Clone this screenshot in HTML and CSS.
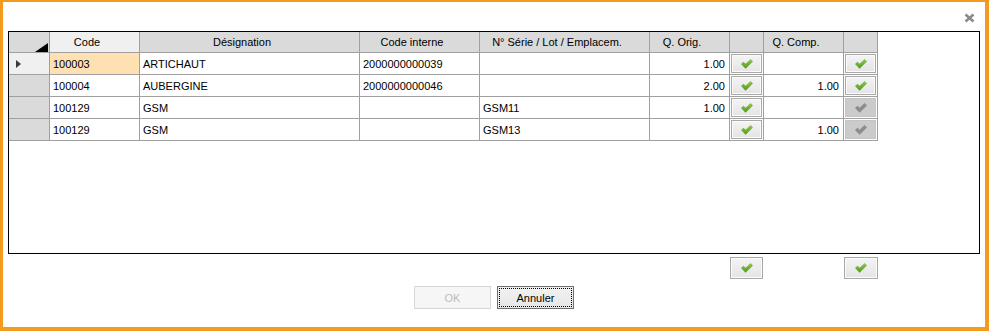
FILE: index.html
```html
<!DOCTYPE html>
<html lang="fr">
<head>
  <meta charset="UTF-8" />
  <title>Comptage</title>
  <link rel="stylesheet" href="styles.css">
</head>
<body>

  <svg class="defs" width="0" height="0">
    <defs>
      <linearGradient id="green" x1="0" y1="0" x2="0" y2="1">
        <stop offset="0" stop-color="#8fcb45"/>
        <stop offset="1" stop-color="#4f9a1f"/>
      </linearGradient>
      <symbol id="chk" viewBox="0 0 12 10">
        <polygon points="0,5 2.5,2.7 4.6,4.8 9.6,0 12,2.4 4.6,9.8"/>
      </symbol>
    </defs>
  </svg>

  <div class="window">
    <div class="titlebar">
      <svg class="close" width="11" height="10" viewBox="0 0 11 10">
        <path d="M1.5 1.5 L9.5 8.5 M9.5 1.5 L1.5 8.5" />
      </svg>
    </div>

    <div class="grid">
      <div class="row head">
        <div class="cell corner">
          <svg width="13" height="9" viewBox="0 0 13 9"><polygon points="0,9 13,0 13,9"/></svg>
        </div>
        <div class="cell current-col">Code</div>
        <div class="cell">Désignation</div>
        <div class="cell">Code interne</div>
        <div class="cell">N° Série / Lot / Emplacem.</div>
        <div class="cell">Q. Orig.</div>
        <div class="cell"></div>
        <div class="cell">Q. Comp.</div>
        <div class="cell"></div>
      </div>

      <div class="row">
        <div class="cell rowhead current"><span class="arrow"></span></div>
        <div class="cell selected">100003</div>
        <div class="cell">ARTICHAUT</div>
        <div class="cell">2000000000039</div>
        <div class="cell"></div>
        <div class="cell num">1.00</div>
        <div class="cell btn-cell"><button class="chk-btn"><svg><use href="#chk"/></svg></button></div>
        <div class="cell num"></div>
        <div class="cell btn-cell"><button class="chk-btn"><svg><use href="#chk"/></svg></button></div>
      </div>

      <div class="row">
        <div class="cell rowhead"></div>
        <div class="cell">100004</div>
        <div class="cell">AUBERGINE</div>
        <div class="cell">2000000000046</div>
        <div class="cell"></div>
        <div class="cell num">2.00</div>
        <div class="cell btn-cell"><button class="chk-btn"><svg><use href="#chk"/></svg></button></div>
        <div class="cell num">1.00</div>
        <div class="cell btn-cell"><button class="chk-btn"><svg><use href="#chk"/></svg></button></div>
      </div>

      <div class="row">
        <div class="cell rowhead"></div>
        <div class="cell">100129</div>
        <div class="cell">GSM</div>
        <div class="cell"></div>
        <div class="cell">GSM11</div>
        <div class="cell num">1.00</div>
        <div class="cell btn-cell"><button class="chk-btn"><svg><use href="#chk"/></svg></button></div>
        <div class="cell num"></div>
        <div class="cell btn-cell"><button class="chk-btn off" disabled><svg><use href="#chk"/></svg></button></div>
      </div>

      <div class="row">
        <div class="cell rowhead"></div>
        <div class="cell">100129</div>
        <div class="cell">GSM</div>
        <div class="cell"></div>
        <div class="cell">GSM13</div>
        <div class="cell num"></div>
        <div class="cell btn-cell"><button class="chk-btn"><svg><use href="#chk"/></svg></button></div>
        <div class="cell num">1.00</div>
        <div class="cell btn-cell"><button class="chk-btn off" disabled><svg><use href="#chk"/></svg></button></div>
      </div>
    </div>

    <div class="totals">
      <button class="chk-btn all"><svg><use href="#chk"/></svg></button>
      <button class="chk-btn all second"><svg><use href="#chk"/></svg></button>
    </div>

    <div class="actions">
      <button class="action" disabled>OK</button>
      <button class="action focused">Annuler</button>
    </div>
  </div>

</body>
</html>
```

FILE: styles.css
```css
body {
  margin: 0;
  font-family: "Liberation Sans", Arial, sans-serif;
  font-size: 11px;
  color: #000;
}

.defs {
  position: absolute;
}

.window {
  width: 989px;
  height: 331px;
  box-sizing: border-box;
  border-style: solid;
  border-color: #f49a1f;
  border-width: 2px 4px 4px 3px;
  background: #fff;
}

.titlebar {
  height: 29px;
  box-sizing: border-box;
  display: flex;
  justify-content: flex-end;
  padding: 11px 10px 0 0;
}

.close path {
  stroke: #8a8a8a;
  stroke-width: 2.6;
  fill: none;
}

.grid {
  margin-left: 5px;
  width: 972px;
  height: 223px;
  box-sizing: border-box;
  border: 1px solid #000;
  background: #fff;
}

.row {
  display: grid;
  grid-template-columns: 41px 90px 220px 120px 170px 80px 34px 80px 34px;
}

.cell {
  height: 22px;
  box-sizing: border-box;
  border-right: 1px solid #a0a0a0;
  border-bottom: 1px solid #a0a0a0;
  padding: 0 3px;
  display: flex;
  align-items: center;
  white-space: nowrap;
  overflow: hidden;
}

.head .cell {
  height: 21px;
  background: #dadada;
  justify-content: center;
  padding-right: 18px;
}

.head .current-col {
  background: #f0f0f0;
}

.head .corner {
  justify-content: flex-end;
  align-items: flex-end;
  padding: 0 1px 0 0;
}

.corner svg {
  display: block;
}

.corner polygon {
  fill: #000;
}

.rowhead {
  background: #dadada;
  padding-left: 7px;
}

.rowhead.current {
  background: #f0f0f0;
}

.arrow {
  width: 0;
  height: 0;
  border-left: 5px solid #3a3a3a;
  border-top: 4px solid transparent;
  border-bottom: 4px solid transparent;
}

.selected {
  background: #ffe0b3;
}

.num {
  justify-content: flex-end;
  padding-right: 4px;
}

.btn-cell {
  padding: 1px;
}

.chk-btn {
  margin: 0;
  padding: 0;
  width: 100%;
  height: 100%;
  box-sizing: border-box;
  border: 1px solid #a9a9a9;
  box-shadow: inset 0 0 0 1px #fbfbfb;
  background: linear-gradient(#f4f4f4, #e4e4e4);
  display: flex;
  align-items: center;
  justify-content: center;
}

.chk-btn svg {
  width: 12px;
  height: 10px;
  fill: url(#green);
}

.chk-btn.off {
  border-color: #c4c4c4;
  box-shadow: none;
  background: #cbcbcb;
}

.chk-btn.off svg {
  fill: #8d8d8d;
}

.totals {
  display: flex;
  margin-top: 3px;
  padding-left: 727px;
}

.chk-btn.all {
  width: 33px;
  height: 22px;
}

.chk-btn.all.second {
  width: 34px;
  margin-left: 81px;
}

.actions {
  display: flex;
  justify-content: center;
  gap: 6px;
  margin-top: 7px;
}

.action {
  position: relative;
  width: 77px;
  height: 23px;
  margin: 0;
  padding: 0;
  font-family: "Liberation Sans", Arial, sans-serif;
  font-size: 11px;
  color: #000;
  border: 1px solid #707070;
  background: linear-gradient(#f2f2f2, #e6e6e6);
}

.action:disabled {
  color: #bcbcbc;
  border-color: #d6d6d6;
  background: #f6f6f6;
}

.action.focused::after {
  content: "";
  position: absolute;
  inset: 1px;
  border: 1px dotted #000;
}
```
